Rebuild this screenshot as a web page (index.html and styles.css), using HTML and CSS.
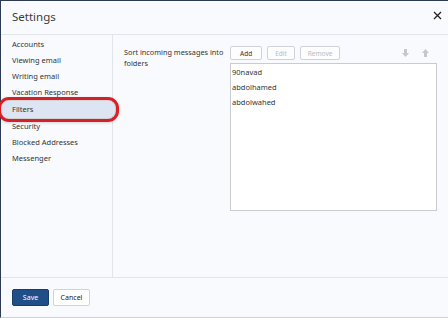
FILE: index.html
```html
<!DOCTYPE html>
<html lang="en">
<head>
    <meta charset="UTF-8">
    <meta name="viewport" content="width=device-width, initial-scale=1.0">
    <link rel="stylesheet" href="styles.css">
    <title>Settings</title>
</head>
<body class="main">

<div class="dialog">
    <div class="titlebar">
        <span class="title">Settings</span>
        <svg class="close" width="9" height="9" viewBox="0 0 9 9">
            <path d="M1 1 L8 8 M8 1 L1 8" stroke="#222" stroke-width="1.3" fill="none"/>
        </svg>
    </div>

    <div class="body">
        <div class="sidebar">
            <div class="nav-item">Accounts</div>
            <div class="nav-item">Viewing email</div>
            <div class="nav-item">Writing email</div>
            <div class="nav-item">Vacation Response</div>
            <div class="nav-item active">Filters</div>
            <div class="nav-item">Security</div>
            <div class="nav-item">Blocked Addresses</div>
            <div class="nav-item">Messenger</div>
        </div>

        <div class="content">
            <div class="label">Sort incoming messages into folders</div>
            <div class="filters">
                <div class="toolbar">
                    <button class="btn">Add</button>
                    <button class="btn disabled">Edit</button>
                    <button class="btn disabled">Remove</button>
                    <span class="spacer"></span>
                    <svg class="arrow" width="7" height="8" viewBox="0 0 7 8">
                        <path d="M2 0 H5 V4 H7 L3.5 8 L0 4 H2 Z" fill="#c4c7cc"/>
                    </svg>
                    <svg class="arrow" width="7" height="8" viewBox="0 0 7 8">
                        <path d="M2 8 H5 V4 H7 L3.5 0 L0 4 H2 Z" fill="#c4c7cc"/>
                    </svg>
                </div>
                <div class="list">
                    <div class="list-item">90navad</div>
                    <div class="list-item">abdolhamed</div>
                    <div class="list-item">abdolwahed</div>
                </div>
            </div>
        </div>
    </div>

    <div class="footer">
        <button class="btn-save">Save</button>
        <button class="btn-cancel">Cancel</button>
    </div>
</div>

</body>
</html>
```

FILE: styles.css
```css
.main {
    margin: 0;
    background-color: #f9fafe;
    font-family: "Noto Sans", "Open Sans", sans-serif;
    color: #222;
}

.dialog {
    width: 448px;
    height: 318px;
    box-sizing: border-box;
    border-top: 1px solid #2c3b52;
    border-left: 1px solid #2c3b52;
    border-bottom: 1px solid #cfd1d6;
    display: flex;
    flex-direction: column;
    background-color: #f9fafe;
}

.titlebar {
    height: 34px;
    box-sizing: border-box;
    border-bottom: 1px solid #e2e5ea;
    display: flex;
    align-items: center;
    padding: 0 6px 3px 11px;
}

.title {
    flex: 1;
    font-size: 11.5px;
    color: #3a3a3a;
}

.close {
    margin-top: -2px;
}

.body {
    display: flex;
    height: 242px;
    border-bottom: 1px solid #e2e5ea;
}

.sidebar {
    width: 111px;
    border-right: 1px solid #e2e5ea;
    padding-top: 1px;
}

.nav-item {
    font-size: 7.5px;
    height: 16px;
    line-height: 16px;
    padding-left: 11px;
    color: #333;
}

.nav-item.active {
    background-color: #dce5f1;
    margin: 1px -3px 0 1px;
    height: 17px;
    line-height: 17px;
    padding-left: 10px;
    border-radius: 7px;
    outline: 3px solid #d91f26;
    outline-offset: 1px;
    box-shadow: 0 1px 3px 4px rgba(0, 0, 0, 0.16);
}

.content {
    flex: 1;
    display: flex;
    padding: 11px 0 0 11px;
}

.label {
    width: 106px;
    font-size: 7.3px;
    line-height: 11px;
    color: #333;
    padding-top: 1px;
}

.filters {
    width: 207px;
}

.toolbar {
    display: flex;
    align-items: center;
    gap: 5px;
    height: 14px;
    margin-bottom: 3px;
}

.btn {
    font-family: "Noto Sans", sans-serif;
    font-size: 6.5px;
    height: 14px;
    padding: 0 9px;
    background-color: #fdfdfe;
    border: 1px solid #cfd3d9;
    border-radius: 2px;
    color: #333;
}

.btn.disabled {
    color: #b8bcc2;
    padding: 0 7px;
}

.spacer {
    flex: 1;
}

.arrow {
    margin-right: 8px;
}

.list {
    height: 144px;
    background-color: #ffffff;
    border: 1px solid #c9cbcf;
    padding-top: 2px;
}

.list-item {
    font-size: 7.5px;
    height: 15px;
    line-height: 13px;
    padding-left: 1px;
    color: #333;
}

.footer {
    flex: 1;
    display: flex;
    align-items: flex-start;
    gap: 4px;
    padding: 11px 0 0 11px;
}

.btn-save {
    width: 37px;
    height: 17px;
    font-family: "Noto Sans", sans-serif;
    font-size: 7px;
    color: #fff;
    background-color: #1f4f86;
    border: 1px solid #173c68;
    border-radius: 2px;
}

.btn-cancel {
    width: 37px;
    height: 17px;
    font-family: "Noto Sans", sans-serif;
    font-size: 7px;
    color: #222;
    background-color: #fff;
    border: 1px solid #cfd3d9;
    border-radius: 2px;
}
```
